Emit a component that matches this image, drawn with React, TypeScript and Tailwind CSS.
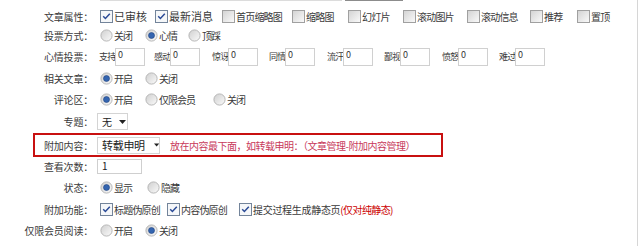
import React from "react";

const FONT = { fontFamily: '"Noto Sans CJK SC", "Noto Sans", sans-serif' };

function Check({ checked }: { checked?: boolean }) {
  return (
    <svg width="13" height="13" viewBox="0 0 13 13" className="shrink-0">
      <defs>
        <linearGradient id="cbg" x1="0" y1="0" x2="1" y2="1">
          <stop offset="0" stopColor="#d2d2d2" />
          <stop offset="1" stopColor="#fbfbfb" />
        </linearGradient>
      </defs>
      <rect x="0.5" y="0.5" width="12" height="12" fill={checked ? "#f5f7f9" : "url(#cbg)"} stroke={checked ? "#73849a" : "#a0a0a0"} />
      {checked && <path d="M3.2 6.3 L5.4 8.5 L9.8 3.8" fill="none" stroke="#2a4a96" strokeWidth="1.5" />}
    </svg>
  );
}

function Radio({ checked }: { checked?: boolean }) {
  return (
    <svg width="13" height="13" viewBox="0 0 13 13" className="shrink-0">
      <defs>
        <linearGradient id="rbg" x1="0" y1="0" x2="1" y2="1">
          <stop offset="0" stopColor="#cfcfcf" />
          <stop offset="1" stopColor="#fbfbfb" />
        </linearGradient>
      </defs>
      <circle cx="6.5" cy="6.5" r="5.6" fill="url(#rbg)" stroke="#b0b0b0" strokeWidth="0.9" />
      {checked && <circle cx="6.5" cy="6.5" r="3" fill="#3465b0" stroke="#1f4280" strokeWidth="0.6" />}
    </svg>
  );
}

function Label({ children, w = "w-[93px]" }: { children: React.ReactNode; w?: string }) {
  return <div className={`${w} shrink-0 text-right text-[10px] tracking-[-0.2px] text-[#3a3a3a] whitespace-nowrap`}>{children}</div>;
}

function CheckItem({ w, checked, text, big }: { w: string; checked?: boolean; text: string; big?: boolean }) {
  return (
    <div className={`${w} shrink-0 flex items-center`}>
      <span className="ml-[3px]"><Check checked={checked} /></span>
      <span className={`ml-[1px] ${big ? "text-[11px]" : "text-[10px] tracking-[-0.8px]"} text-[#3a3a3a] whitespace-nowrap`}>{text}</span>
    </div>
  );
}

function RadioItem({ w, checked, text }: { w: string; checked?: boolean; text: string }) {
  return (
    <div className={`${w} shrink-0 flex items-center`}>
      <span className="ml-[3px]"><Radio checked={checked} /></span>
      <span className="ml-[1px] text-[10px] tracking-[-1px] text-[#3a3a3a] whitespace-nowrap">{text}</span>
    </div>
  );
}

function Mood({ text, w }: { text: string; w: string }) {
  return (
    <div className={`${w} shrink-0 flex items-center`}>
      <span className="w-[16px] text-[9px] tracking-[-0.8px] text-[#3a3a3a] whitespace-nowrap">{text}</span>
      <div className="w-[30px] h-[18px] border border-[#d0d0d0] bg-white pl-[2px] text-[9px] leading-[11px] text-[#333]">0</div>
    </div>
  );
}

export default function App() {
  return (
    <div className="w-[640px] h-[246px] bg-white overflow-hidden flex" style={FONT}>
      <div className="w-[637px] h-full flex flex-col">
        {/* remnants of previous row */}
        <div className="h-[6px] flex items-start">
          <div className="ml-[100px] w-[242px] h-[1px] bg-[#dcdcdc]" />
          <div className="ml-[3px] w-[58px] h-[1px] bg-[#8c8c8c]" />
        </div>

        {/* 文章属性 */}
        <div className="h-[20px] flex items-center">
          <Label>文章属性：</Label>
          <div className="ml-[4px] flex items-center">
            <CheckItem w="w-[55px]" checked text="已审核" big />
            <CheckItem w="w-[67px]" checked text="最新消息" big />
            <CheckItem w="w-[70px]" text="首页缩略图" />
            <CheckItem w="w-[56px]" text="缩略图" />
            <CheckItem w="w-[55px]" text="幻灯片" />
            <CheckItem w="w-[64px]" text="滚动图片" />
            <CheckItem w="w-[63px]" text="滚动信息" />
            <CheckItem w="w-[47px]" text="推荐" />
            <CheckItem w="w-[40px]" text="置顶" />
          </div>
        </div>

        {/* 投票方式 */}
        <div className="h-[19px] flex items-center">
          <Label>投票方式：</Label>
          <div className="ml-[4px] flex items-center">
            <RadioItem w="w-[45px]" text="关闭" />
            <RadioItem w="w-[43px]" checked text="心情" />
            <RadioItem w="w-[40px]" text="顶踩" />
          </div>
        </div>

        {/* 心情投票 */}
        <div className="h-[23px] flex items-center">
          <Label>心情投票：</Label>
          <div className="ml-[6px] flex items-center">
            <Mood w="w-[55px]" text="支持" />
            <Mood w="w-[58px]" text="感动" />
            <Mood w="w-[57px]" text="惊讶" />
            <Mood w="w-[58px]" text="同情" />
            <Mood w="w-[57px]" text="流汗" />
            <Mood w="w-[58px]" text="鄙视" />
            <Mood w="w-[57px]" text="愤怒" />
            <Mood w="w-[57px]" text="难过" />
          </div>
        </div>

        {/* 相关文章 */}
        <div className="h-[21px] flex items-center">
          <Label>相关文章：</Label>
          <div className="ml-[4px] flex items-center">
            <RadioItem w="w-[45px]" checked text="开启" />
            <RadioItem w="w-[40px]" text="关闭" />
          </div>
        </div>

        {/* 评论区 */}
        <div className="h-[21px] flex items-center">
          <Label>评论区：</Label>
          <div className="ml-[4px] flex items-center">
            <RadioItem w="w-[45px]" checked text="开启" />
            <RadioItem w="w-[68px]" text="仅限会员" />
            <RadioItem w="w-[40px]" text="关闭" />
          </div>
        </div>

        {/* 专题 */}
        <div className="h-[23px] flex items-center">
          <Label>专题：</Label>
          <div className="ml-[4px] w-[31px] h-[17px] border border-[#d4d4d4] bg-white flex items-center text-[#222]">
            <span className="ml-[4px] text-[10px]">无</span>
            <svg width="7" height="4" viewBox="0 0 7 4" className="ml-[7px]"><path d="M0 0 H7 L3.5 4 Z" fill="#222" /></svg>
          </div>
        </div>

        {/* 附加内容 */}
        <div className="h-[24px] ml-[33px] w-[410px] border-2 border-[#c81010] flex items-center">
          <Label w="w-[58px]">附加内容：</Label>
          <div className="ml-[4px] w-[63px] h-[17px] border border-[#d4d4d4] bg-white flex items-center text-[#222]">
            <span className="ml-[4px] text-[11px] tracking-[-0.3px] whitespace-nowrap">转载申明</span>
            <svg width="7" height="4" viewBox="0 0 7 4" className="ml-[9px]"><path d="M0 0 H7 L3.5 4 Z" fill="#222" /></svg>
          </div>
          <span className="ml-[10px] text-[10px] tracking-[-0.5px] text-[#c8385a] whitespace-nowrap">放在内容最下面，如转载申明：（文章管理-附加内容管理）</span>
        </div>

        {/* 查看次数 */}
        <div className="h-[19px] flex items-center">
          <Label>查看次数：</Label>
          <div className="ml-[4px] w-[45px] h-[15px] border border-[#cfcfcf] bg-white pl-[4px] text-[10px] leading-[12px] text-[#222]">1</div>
        </div>

        {/* 状态 */}
        <div className="h-[23px] flex items-center">
          <Label>状态：</Label>
          <div className="ml-[4px] flex items-center">
            <RadioItem w="w-[47px]" checked text="显示" />
            <RadioItem w="w-[40px]" text="隐藏" />
          </div>
        </div>

        {/* 附加功能 */}
        <div className="h-[20px] flex items-center">
          <Label>附加功能：</Label>
          <div className="ml-[4px] flex items-center">
            <CheckItem w="w-[67px]" checked text="标题伪原创" />
            <CheckItem w="w-[72px]" checked text="内容伪原创" />
            <div className="flex items-center">
              <span className="ml-[3px]"><Check checked /></span>
              <span className="ml-[1px] text-[10px] tracking-[-0.3px] text-[#3a3a3a] whitespace-nowrap">提交过程生成静态页</span>
              <span className="text-[10px] tracking-[-0.6px] text-[#cc0000] whitespace-nowrap">(仅对纯静态)</span>
            </div>
          </div>
        </div>

        {/* 仅限会员阅读 */}
        <div className="h-[22px] flex items-center">
          <Label>仅限会员阅读：</Label>
          <div className="ml-[4px] flex items-center">
            <RadioItem w="w-[45px]" text="开启" />
            <RadioItem w="w-[40px]" checked text="关闭" />
          </div>
        </div>
      </div>
      <div className="w-[1px] h-full bg-[#d6d6d6]" />
      <div className="w-[2px] h-full bg-white" />
    </div>
  );
}
